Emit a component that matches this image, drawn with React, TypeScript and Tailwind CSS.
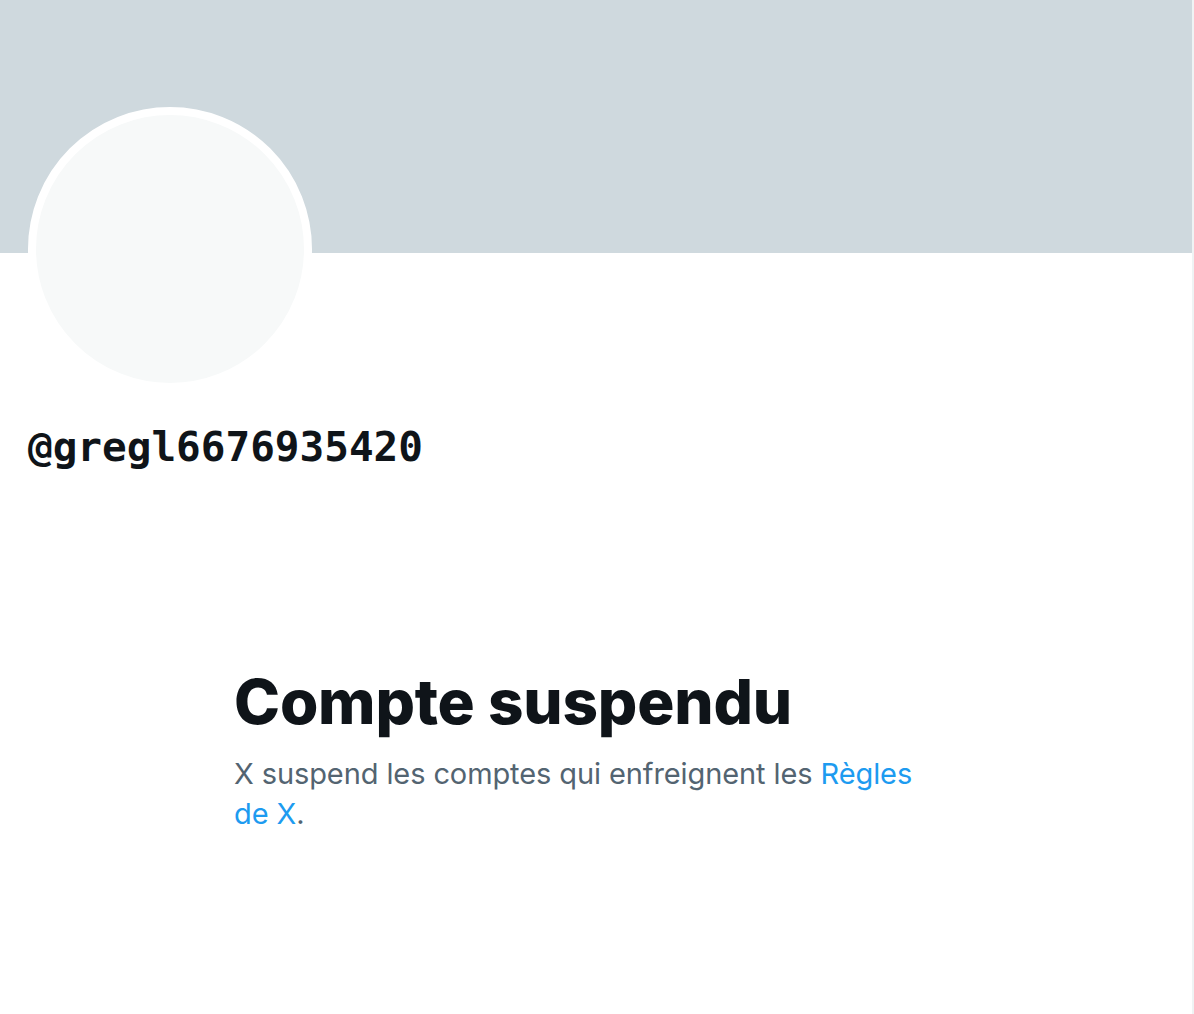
export default function App() {
  return (
    <div className="w-[1194px] min-h-[1014px] bg-white">
      <div className="w-[1194px] min-h-[1014px] border-r-2 border-[#eff3f4]">
        <div className="h-[253px] bg-[#cfd9de]" />
        <div className="pl-[28px]">
          <div className="-mt-[146px] w-[284px] h-[284px] rounded-full border-[8px] border-white bg-[#f7f9f9]" />
          <div
            className="mt-[32px] text-[41px] leading-[48px] font-bold text-[#0f1419]"
            style={{ fontFamily: '"DejaVu Sans Mono", monospace' }}
          >
            @gregl6676935420
          </div>
        </div>
        <div className="ml-[234px] mt-[195px] w-[680px]" style={{ fontFamily: 'Inter, "Noto Sans", sans-serif' }}>
          <h1 className="text-[62px] leading-[72px] font-extrabold text-[#0f1419] tracking-[-0.2px]">Compte suspendu</h1>
          <p className="mt-[16px] text-[29px] leading-[40px] text-[#536471] tracking-[-0.1px]">
            X suspend les comptes qui enfreignent les <span className="text-[#1d9bf0]">Règles</span>
            <br />
            <span className="text-[#1d9bf0]">de X</span>.
          </p>
        </div>
      </div>
    </div>
  );
}
